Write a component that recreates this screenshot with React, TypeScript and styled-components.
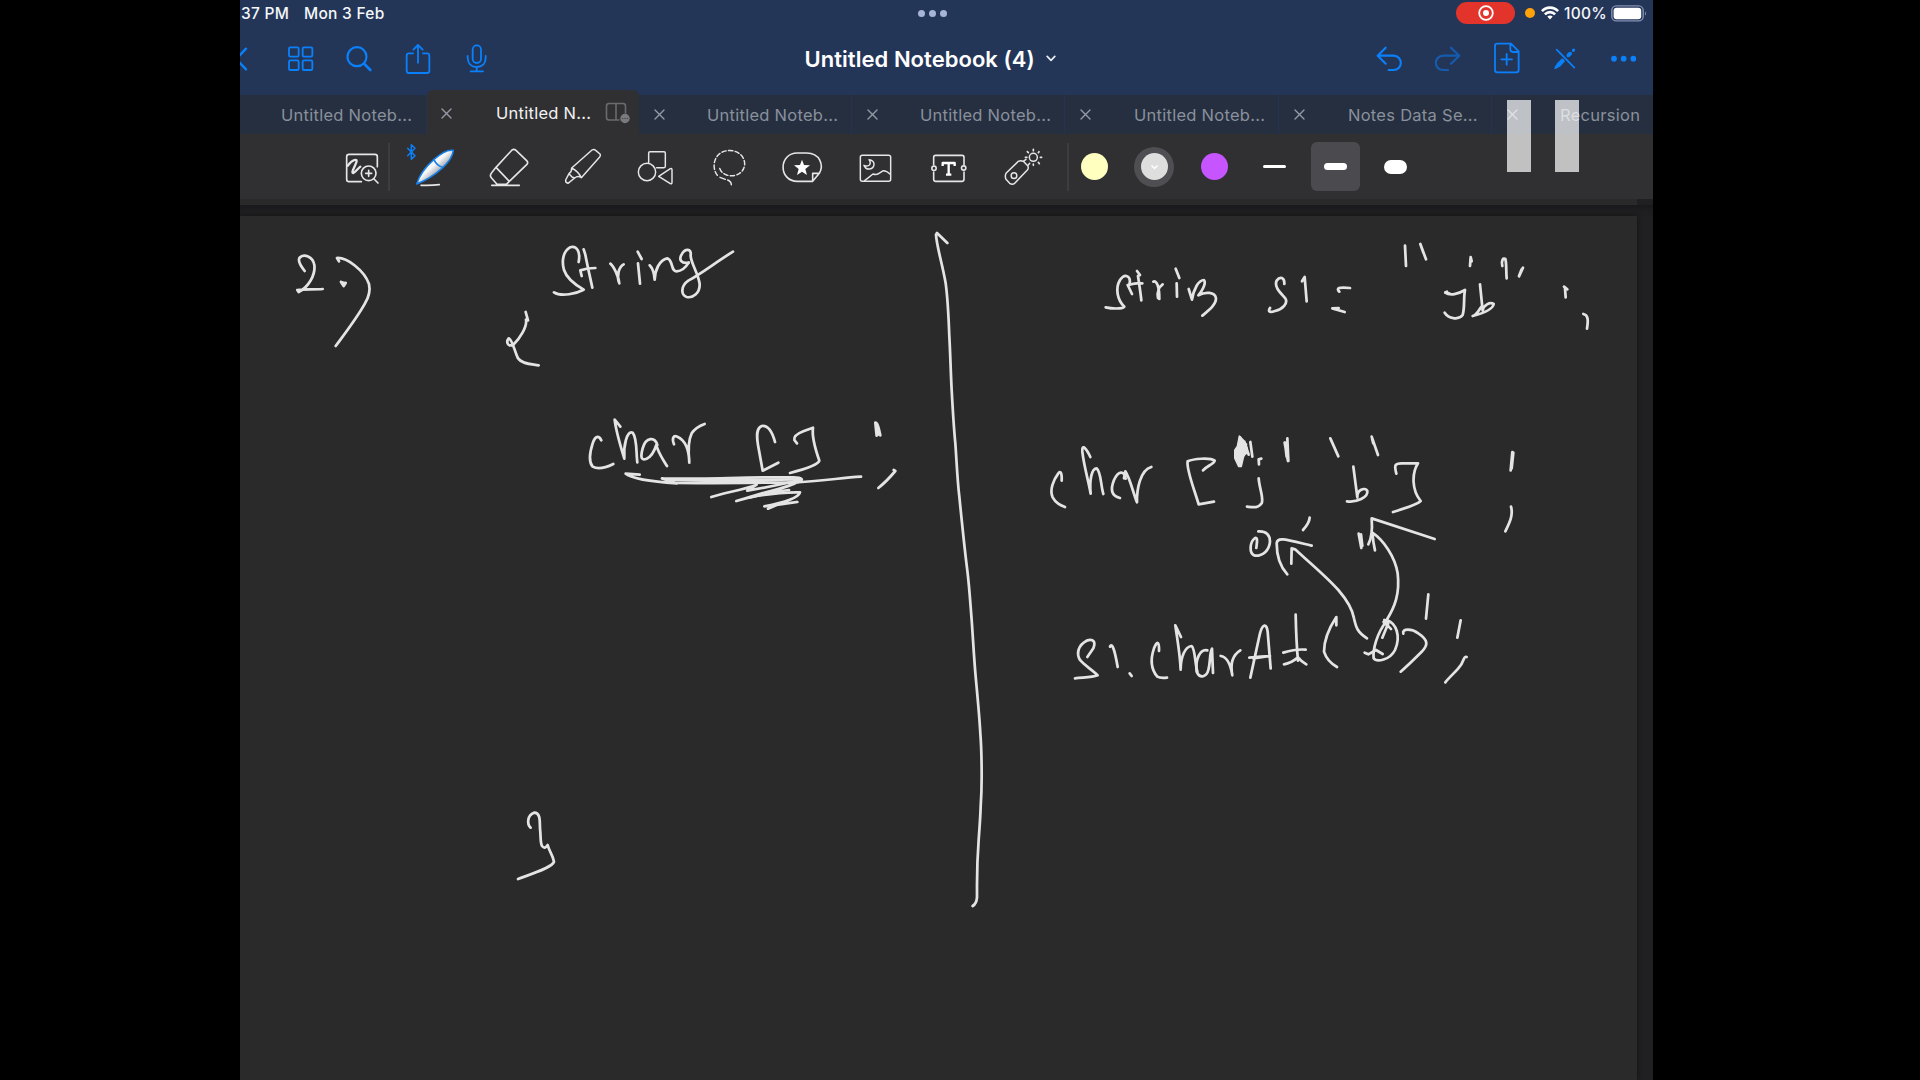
import React from "react";
import styled, { createGlobalStyle } from "styled-components";

const BLUE = "#0a80fb";

const Global = createGlobalStyle`
  html, body { margin: 0; background: #000; overflow: hidden; }
  * { box-sizing: border-box; }
`;

const Stage = styled.div`
  width: 1920px;
  height: 1080px;
  background: #000;
  display: flex;
  justify-content: flex-start;
  padding-left: 240px;
  font-family: Inter, "Liberation Sans", sans-serif;
`;

const Tablet = styled.div`
  position: relative;
  width: 1413px;
  height: 1080px;
  overflow: hidden;
  display: flex;
  flex-direction: column;
  background: #202022;
`;

const Header = styled.header`
  height: 134px;
  flex: none;
  display: flex;
  flex-direction: column;
  background: #243658;
`;

const StatusBar = styled.div`
  height: 26px;
  flex: none;
  display: grid;
  grid-template-columns: 620px 1fr 620px;
  align-items: center;
  color: #f4f6fa;
  font-size: 15.5px;
  font-weight: 500;
  line-height: 26px;
  white-space: nowrap;
`;

const StatusLeft = styled.div`
  display: flex;
  padding-left: 1px;
`;

const StatusLabel = styled.span<{ $w: number; $ls?: number }>`
  width: ${(p) => p.$w}px;
  height: 26px;
  line-height: 28px;
  letter-spacing: ${(p) => p.$ls ?? 0}px;
`;

const Dots = styled.div`
  display: flex;
  justify-content: center;
  gap: 3.7px;
  padding-right: 28px;
  width: 100%;
`;

const Dot = styled.i`
  width: 7px;
  height: 7px;
  border-radius: 50%;
  background: #a6b4d7;
`;

const StatusRight = styled.div`
  display: flex;
  align-items: center;
  justify-content: flex-end;
  height: 26px;
  padding-right: 6px;
`;

const RecordPill = styled.div`
  width: 59px;
  height: 22px;
  border-radius: 11px;
  background: #e3342b;
  display: flex;
  align-items: center;
  justify-content: center;
  margin-right: 10px;
`;

const MicDot = styled.i`
  width: 10px;
  height: 10px;
  border-radius: 50%;
  background: #ffa20a;
  margin-right: 6px;
`;

const NavBar = styled.nav`
  height: 69px;
  flex: none;
  display: flex;
  justify-content: space-between;
`;

const NavGroup = styled.div<{ $w: number }>`
  display: flex;
  width: ${(p) => p.$w}px;
`;

const Title = styled.div`
  display: flex;
  align-items: center;
  height: 65px;
  gap: 11px;
  width: 555px;
  color: #fff;
  font-size: 22px;
  font-weight: 600;
  letter-spacing: 0.04px;
  white-space: nowrap;
`;

const Tabs = styled.div`
  height: 39px;
  flex: none;
  display: flex;
  align-items: flex-end;
  background: #252f40;
`;

const Tab = styled.div<{ $w: number; $active?: boolean }>`
  width: ${(p) => p.$w}px;
  height: ${(p) => (p.$active ? 44 : 39)}px;
  padding-top: ${(p) => (p.$active ? 2 : 0)}px;
  flex: none;
  display: flex;
  align-items: center;
  border-radius: ${(p) => (p.$active ? "6px 6px 0 0" : "0")};
  border-right: ${(p) => (p.$active ? "0" : "1px solid #243350")};
  background: ${(p) => (p.$active ? "#303032" : "transparent")};
  color: ${(p) => (p.$active ? "#f2f2f3" : "#8a909c")};
`;

const CloseSlot = styled.span<{ $shift?: number }>`
  width: 39px;
  flex: none;
  display: flex;
  justify-content: center;
  padding-left: ${(p) => p.$shift ?? 0}px;
`;

const TabName = styled.span<{ $pad: number }>`
  padding-left: ${(p) => p.$pad}px;
  letter-spacing: 0.27px;
  font-size: 16.5px;
  line-height: 20px;
  white-space: nowrap;
`;

const SplitSlot = styled.span`
  display: flex;
  margin-left: auto;
  margin-right: 8px;
`;

const Toolbar = styled.div`
  height: 65px;
  flex: none;
  display: flex;
  align-items: center;
  background: #303032;
`;

const Rule = styled.i`
  width: 2px;
  height: 48px;
  background: #3d3d40;
`;

const ToolGap = styled.span<{ $w: number }>`
  width: ${(p) => p.$w}px;
  flex: none;
`;

const Slot = styled.div<{ $w: number }>`
  width: ${(p) => p.$w}px;
  flex: none;
  display: flex;
  align-items: center;
  justify-content: center;
`;

const Swatch = styled.div<{ $color: string; $selected?: boolean }>`
  width: 40px;
  height: 40px;
  border-radius: 50%;
  display: flex;
  align-items: center;
  justify-content: center;
  background: ${(p) => (p.$selected ? "#4e4e53" : "transparent")};
  &::before {
    content: "";
    width: 27px;
    height: 27px;
    border-radius: 50%;
    background: ${(p) => p.$color};
  }
`;

const SwatchMark = styled.svg`
  width: 27px;
  height: 27px;
  margin-left: -27px;
`;

const Nib = styled.div<{ $h: number; $selected?: boolean }>`
  width: 49px;
  height: 49px;
  border-radius: 6px;
  display: flex;
  align-items: center;
  justify-content: center;
  background: ${(p) => (p.$selected ? "#4b4b4f" : "transparent")};
  &::before {
    content: "";
    width: 23px;
    height: ${(p) => p.$h}px;
    border-radius: ${(p) => p.$h / 2}px;
    background: #fff;
  }
`;

const PreviousPage = styled.div`
  width: 1397px;
  height: 6px;
  flex: none;
  background: #2a2a2b;
`;

const PageGap = styled.div`
  height: 11px;
  flex: none;
  background: linear-gradient(#19191b, #1e1e20 50%, #1f1f21);
`;

const Page = styled.main`
  width: 1397px;
  height: 864px;
  flex: none;
  background: #2a2a2a;
  box-shadow: 0 0 5px rgba(0, 0, 0, 0.45);
`;

const Ink = styled.svg`
  display: block;
  width: 1397px;
  height: 864px;
  fill: none;
  stroke: #e4e4e4;
  stroke-width: 8.2;
  stroke-linecap: round;
  stroke-linejoin: round;
`;

const Pause = styled.div`
  position: absolute;
  left: 1267px;
  top: 100px;
  display: flex;
  gap: 24px;
`;

const PauseBar = styled.i`
  width: 24px;
  height: 72px;
  background: rgba(255, 255, 255, 0.7);
`;

const Art = styled.svg<{ $color: string; $sw: number; $cap?: string }>`
  display: block;
  flex: none;
  fill: none;
  stroke: ${(p) => p.$color};
  stroke-width: ${(p) => p.$sw};
  stroke-linecap: ${(p) => p.$cap ?? "round"};
  stroke-linejoin: round;
`;

type IconProps = { x: number; w: number; color?: string; sw?: number; children: React.ReactNode };

/* Icon artwork is drawn on a grid three times finer than the layout. */
const ToolIcon = ({ x, w, color = "#e6e6e6", sw = 4.8, children }: IconProps) => (
  <Art width={w} height={65} viewBox={`${x} 402 ${w * 3} 195`} $color={color} $sw={sw}>
    {children}
  </Art>
);

const NavIcon = ({ x, w, color = BLUE, sw = 6.4, children }: IconProps) => (
  <Art width={w} height={69} viewBox={`${x} 78 ${w * 3} 207`} $color={color} $sw={sw}>
    {children}
  </Art>
);

const Close = () => (
  <Art width={11} height={11} viewBox="0 0 11 11" $color="#959ba6" $sw={1.4}>
    <path d="M1 1L10 10M10 1L1 10" />
  </Art>
);

const inactiveTabs = [
  { name: "Untitled Noteb...", w: 213, pad: 29 },
  { name: "Untitled Noteb...", w: 213, pad: 29 },
  { name: "Untitled Noteb...", w: 214, pad: 30 },
  { name: "Notes Data Se...", w: 213, pad: 30 },
  { name: "Recursion", w: 213, pad: 29 },
];

const strokes: { at: [number, number]; d: string[] }[] = [
  {
    at: [240, 210],
    d: [
      "M194 183C182 168 172 150 180 142C192 132 218 138 223 165C227 195 205 232 176 246L172 240C190 237 220 239 248 237",
      "M303 216L316 220M303 216L311 228L317 219",
      "M297 154L291 144C320 142 372 180 387 222C392 245 386 262 375 280C350 325 315 370 287 408",
      "M1016 156C1022 125 1010 105 990 112C968 125 965 155 972 180C980 205 1012 228 1031 239C1010 250 965 262 942 247",
      "M1031 118L1036 134C1042 165 1051 205 1057 233M1066 174C1050 174 1030 178 1021 181L1025 198",
      "M1111 161C1122 170 1136 200 1138 220C1128 195 1138 170 1151 163",
      "M1193 125L1205 147M1194 160L1200 221",
      "M1229 166C1238 175 1243 195 1244 209C1245 180 1258 150 1282 145C1300 150 1292 185 1310 184C1330 183 1340 168 1346 158",
      "M1346 158C1325 162 1315 150 1325 133C1335 115 1355 115 1352 135C1350 155 1375 190 1379 222C1380 250 1358 265 1340 261C1322 255 1322 228 1345 212C1385 190 1430 155 1479 125",
      "M857 306L864 331L858 329C862 350 840 385 820 404C802 412 798 395 806 385C818 390 822 420 834 445C845 462 875 462 896 466",
    ],
  },
  {
    at: [560, 390],
    d: [
      "M124 151C116 135 105 138 98 160C90 185 85 215 98 230C115 240 140 232 160 222",
      "M181 110L164 89C168 125 182 170 193 206C190 170 200 120 218 128C232 145 228 190 232 217",
      "M292 165C285 140 258 140 248 175C240 205 245 212 260 206C275 200 284 180 289 165C295 190 310 210 321 228",
      "M342 163C335 145 340 135 352 140C375 150 387 180 388 218C385 190 385 150 395 130C405 115 420 107 434 102",
      "M645 156C638 130 625 105 605 108C588 115 590 140 594 165L608 242L655 218",
      "M711 160L703 150C700 138 715 130 730 124L759 113C755 140 765 175 778 212C775 225 725 240 690 249",
      "M950 137L946 98C954 98 957 120 961 136M949 99L953 135",
      "M1001 240L1006 243C990 262 975 278 955 294",
      "M239 254L197 251C215 265 270 275 350 280L306 265C350 270 600 260 700 262C728 262 732 270 715 276",
      "M350 279C480 280 600 278 700 277C780 274 840 264 903 260M330 270C450 272 600 270 720 268",
      "M454 321C495 308 555 298 590 284L562 302C620 292 670 282 722 270C700 285 660 297 620 306L529 333C580 318 640 305 687 300",
      "M570 322C620 312 670 306 720 307C715 325 670 338 613 349C650 345 685 338 712 336L650 345L624 356",
    ],
  },
  {
    at: [900, 210],
    d: [
      "M142 99L111 69L108 74C110 110 128 165 137 220C144 270 146 325 148 380C151 430 152 485 155 540C158 595 161 650 166 700C170 755 172 810 178 860C184 920 194 1020 202 1082C208 1130 211 1180 215 1230C219 1285 222 1345 227 1400C232 1455 238 1515 241 1570C245 1620 245 1660 245 1700C245 1735 244 1760 242 1790C241 1825 238 1860 236 1890C233 1930 231 1980 231 2025V2062C230 2076 226 2083 218 2088",
    ],
  },
  {
    at: [480, 780],
    d: [
      "M152 143C140 132 142 105 162 98C182 97 179 125 180 145C183 170 180 185 186 198C193 207 198 202 203 195C208 215 218 225 222 245C218 262 160 280 114 297",
    ],
  },
  {
    at: [1090, 220],
    d: [
      "M118 195C125 168 105 158 90 180C75 205 82 240 103 260C95 268 65 266 47 262",
      "M141 153L150 165L144 168C148 195 152 220 154 241M157 190C143 188 125 192 113 195L126 222",
      "M190 185C200 180 208 200 208 237L204 234C200 215 208 200 218 193",
      "M257 146L268 174M260 190L261 230",
      "M296 207L306 239C310 210 325 180 342 180C350 190 335 215 325 226C345 215 375 215 378 235C378 255 355 272 337 287",
      "M583 192C584 172 570 168 560 182C552 200 568 215 586 235C595 250 578 268 555 273C535 280 535 272 540 264",
      "M636 184L644 171L650 244",
      "M748 215C738 205 745 200 780 204M764 276L727 265L746 264",
    ],
  },
  {
    at: [1350, 220],
    d: [
      "M165 77L168 138M211 72L228 118M212 75L220 98",
      "M360 138L362 111L365 124",
      "M457 138C453 120 460 113 466 117C470 130 468 155 470 175",
      "M519 143L507 169M515 148L507 168",
      "M286 217C300 228 325 222 345 210C340 235 345 260 338 285C325 302 295 295 284 278",
      "M291 215L286 218L298 221",
      "M390 193L398 272C400 255 420 245 431 252C430 265 405 278 368 288C382 285 388 265 395 260",
      "M642 200L652 208L645 205L647 232",
      "M700 282C715 285 715 300 711 326",
    ],
  },
  {
    at: [1040, 410],
    d: [
      "M65 212C66 190 62 180 55 190C40 210 28 240 38 262C48 280 60 285 75 291",
      "M151 141C140 118 125 98 127 125C132 170 145 210 152 251C148 210 155 175 170 175C183 185 182 225 190 252",
      "M257 206C252 180 235 182 222 210C210 240 215 258 240 264M252 205L256 184C270 205 280 250 291 277C290 240 300 180 334 171",
      "M489 181C500 168 522 162 524 152C510 142 460 146 443 154C438 175 460 230 476 283L522 275",
      "M657 163L656 148L664 146M656 205C658 235 672 265 665 280C655 295 640 292 621 290",
      "M631 96L637 140M613 95L626 134M600 82L605 125M618 103L612 135",
      "M734 98L744 153M742 85L745 153M735 98L740 140",
      "M871 85L895 139M995 80L1014 135M996 85L1000 100",
      "M940 170L952 262C950 240 975 230 982 243C985 262 950 278 921 274",
      "M1069 191C1062 165 1065 160 1085 160L1134 160C1115 190 1115 240 1142 273C1130 285 1095 295 1059 306",
      "M1417 126L1412 181M1420 128L1415 175M1413 290C1420 315 1410 335 1396 364",
      "M809 323C808 338 800 348 789 360",
      "M655 364C678 362 690 375 690 395C688 420 670 438 645 437C625 430 630 395 645 384C655 382 650 400 649 414",
      "M742 493C715 465 710 430 710 400C712 380 735 388 815 407",
      "M754 461L755 415L765 418C800 450 860 500 895 540C925 575 938 600 942 625C948 650 950 665 981 685",
      "M956 371L964 414M963 373L967 408M985 403C995 385 998 365 995 325L1184 387",
      "M1005 421C1000 400 998 380 997 368C1030 390 1065 440 1073 490C1080 550 1065 590 1040 630",
      "M142 741L160 715C168 695 160 685 140 692C115 705 108 730 120 750C135 768 158 780 173 796C155 803 130 802 105 805",
      "M210 710C217 695 225 725 233 771M269 790L275 798",
      "M357 723C358 695 352 690 342 715C330 750 335 780 352 800C360 805 370 804 381 803",
      "M423 681L406 646C412 690 420 730 422 779C422 740 435 710 455 708C465 715 465 760 472 785",
      "M502 721C480 715 465 750 470 785C480 808 500 800 505 780C512 755 508 730 516 716L519 789",
      "M542 738C560 740 572 765 577 796C570 760 578 735 601 721",
      "M631 803L660 670C668 640 680 640 683 665L692 775M628 743C650 740 670 738 690 738L640 745",
      "M767 614C768 660 770 710 774 752M730 728C750 722 775 717 797 719M732 763C748 760 762 752 774 742C782 752 790 758 799 763",
      "M889 646L889 621C870 650 852 690 852 725C860 750 875 762 891 771",
      "M1053 657C1035 635 1020 640 1040 630C1070 640 1083 680 1065 720C1050 750 1010 758 1001 745C998 720 1010 670 1040 633",
      "M1033 630L1045 640L1027 683M974 728L985 733L1008 720L1028 732",
      "M1090 671C1085 655 1115 655 1135 670C1165 690 1165 705 1145 725C1125 745 1105 765 1082 785",
      "M1165 553L1158 626M1262 631L1252 683",
      "M1280 741C1268 738 1275 755 1255 775C1242 790 1225 805 1216 817",
    ],
  },
];

const App = () => (
  <>
    <Global />
    <Stage>
      <Tablet>
        <Header>
          <StatusBar>
            <StatusLeft>
              <StatusLabel $w={63} $ls={0.25}>37 PM</StatusLabel>
              <StatusLabel $w={100} $ls={0.27}>Mon 3 Feb</StatusLabel>
            </StatusLeft>
            <Dots>
              <Dot />
              <Dot />
              <Dot />
            </Dots>
            <StatusRight>
              <RecordPill>
                <Art width={16} height={16} viewBox="0 0 16 16" $color="#fff" $sw={1.8}>
                  <circle cx="8" cy="8" r="6.8" />
                  <circle cx="8" cy="8" r="3" fill="#fff" stroke="none" />
                </Art>
              </RecordPill>
              <MicDot />
              <Art width={18} height={14} viewBox="0 0 18 14" $color="#fff" $sw={2.6} $cap="butt">
                <path d="M0.9 5.2C5.4 0.4 12.6 0.4 17.1 5.2" />
                <path d="M3.9 8.4C6.8 5.4 11.2 5.4 14.1 8.4" />
                <path d="M9 13.4L6.3 10.5C7.8 9 10.2 9 11.7 10.5Z" fill="#fff" stroke="none" />
              </Art>
              <ToolGap $w={5} />
              <StatusLabel $w={47} $ls={0.3}>100%</StatusLabel>
              <Art width={36} height={17} viewBox="0 0 36 17" $color="#8390b4" $sw={1.4}>
                <rect x="0.8" y="0.9" width="31.4" height="15" rx="4.5" />
                <rect x="2.6" y="2.8" width="27.6" height="11.4" rx="3" fill="#fff" stroke="none" />
                <path d="M34 6.4C35.4 7.2 35.4 9.6 34 10.4Z" fill="#8390b4" stroke="none" />
              </Art>
            </StatusRight>
          </StatusBar>

          <NavBar>
            <NavGroup $w={564}>
              <NavIcon x={30} w={32} sw={7}>
                <path d="M48 146L19 177L48 208" />
              </NavIcon>
              <NavIcon x={126} w={58} sw={5.4}>
                <rect x="177" y="142" width="29" height="28" rx="4" />
                <rect x="218" y="142" width="29" height="28" rx="4" />
                <rect x="177" y="181" width="29" height="29" rx="4" />
                <rect x="218" y="181" width="29" height="29" rx="4" />
              </NavIcon>
              <NavIcon x={300} w={59}>
                <circle cx="381" cy="170" r="28.5" />
                <path d="M402 191L421 210" strokeWidth="8" />
              </NavIcon>
              <NavIcon x={477} w={59} sw={5.4}>
                <path d="M549 160H537Q530 160 530 167V212Q530 219 537 219H591Q598 219 598 212V167Q598 160 591 160H579" />
                <path d="M564 188V136M550 149L564 135L578 149" />
              </NavIcon>
              <NavIcon x={654} w={59} sw={5.4}>
                <rect x="728" y="136" width="25" height="53" rx="12.5" />
                <path d="M713 168V174Q715 201 740 201Q766 201 767 174V168M740 201V213M722 214H759" />
              </NavIcon>
            </NavGroup>
            <Title>
              <span>Untitled Notebook (4)</span>
              <Art width={10} height={7} viewBox="0 0 10 7" $color="#e8ecf4" $sw={1.7}>
                <path d="M1.2 1.4L5 5.4L8.8 1.4" />
              </Art>
            </Title>
            <NavGroup $w={293}>
              <NavIcon x={540} w={59}>
                <path d="M617 143L593 167L617 191M593 167H640C670 167 670 210 640 210H626" />
              </NavIcon>
              <NavIcon x={717} w={59} color="#155caf">
                <path d="M813 143L838 167L813 191M838 167H790C760 167 760 210 790 210H804" />
              </NavIcon>
              <NavIcon x={894} w={58} sw={5.4}>
                <path d="M993 131H952Q945 131 945 138V210Q945 217 952 217H1009Q1016 217 1016 210V154ZM991 133V148Q991 156 999 156H1014M980 162V194M964 178H996" />
              </NavIcon>
              <NavIcon x={1068} w={59} sw={5}>
                <path d="M1130 149L1183 203" />
                <path d="M1122 208L1130 191L1146 175L1155 184L1140 200ZM1160 163L1168 155L1176 163L1168 171Z" fill={BLUE} stroke="none" />
                <path d="M1128 202L1149 181" strokeWidth="8" />
                <path d="M1164 167L1171 160M1180 151L1181 150" strokeWidth="9" />
              </NavIcon>
              <NavIcon x={1245} w={58}>
                <g fill={BLUE} stroke="none">
                  <circle cx="1302" cy="176" r="8.5" />
                  <circle cx="1331" cy="176" r="8.5" />
                  <circle cx="1360" cy="176" r="8.5" />
                </g>
              </NavIcon>
            </NavGroup>
          </NavBar>

          <Tabs>
            <Tab $w={187}>
              <TabName $pad={41}>Untitled Noteb...</TabName>
            </Tab>
            <Tab $w={212} $active>
              <CloseSlot>
                <Close />
              </CloseSlot>
              <TabName $pad={30}>Untitled N...</TabName>
              <SplitSlot>
                <Art width={26} height={22} viewBox="0 0 26 22" $color="#6b6b6f" $sw={1.6}>
                  <path d="M14 18H4Q1.5 18 1.5 15.500V4Q1.500 1.500 4 1.500H18Q20.500 1.500 20.500 4V11M11 1.500V18" />
                  <circle cx="20" cy="16.500" r="4.700" fill="#7a7a7e" stroke="none" />
                  <path d="M17.700 16.500H17.700M20 16.500H20M22.300 16.500H22.300" stroke="#303032" strokeWidth="1.200" />
                </Art>
              </SplitSlot>
            </Tab>
            {inactiveTabs.map((t, i) => (
              <Tab key={i} $w={t.w}>
                <CloseSlot $shift={2}>
                  <Close />
                </CloseSlot>
                <TabName $pad={t.pad}>{t.name}</TabName>
              </Tab>
            ))}
          </Tabs>
        </Header>

        <Toolbar>
          <ToolGap $w={85} />
          <ToolIcon x={285} w={63} sw={5}>
            <path d="M394 545H357Q350 545 350 538V470Q350 463 357 463H435Q442 463 442 470V500" />
            <path d="M353 497C368 478 384 474 379 487C374 500 362 520 370 519C377 516 384 505 391 500" strokeWidth="7" />
            <circle cx="416" cy="520" r="22" />
            <path d="M416 511V529M407 520H425M432 537L444 549" />
          </ToolIcon>
          <Rule />
          <ToolGap $w={8} />
          <ToolIcon x={504} w={73}>
            <defs>
              <linearGradient id="barrel" x1="0" y1="0" x2="1" y2="1">
                <stop offset="0.46" stopColor="#f4f6f8" />
                <stop offset="0.62" stopColor="#a4a9af" />
              </linearGradient>
            </defs>
            <path d="M533 445L555 467L544 478V434L555 445L533 467" stroke={BLUE} strokeWidth="4.500" />
            <path d="M560 552C570 520 586 501 612 478C635 458 655 448 670 451C668 471 656 487 635 506C611 527 587 542 560 552Z" fill="url(#barrel)" stroke="#1680e8" strokeWidth="4.500" />
            <path d="M613 481Q621 497 636 501" stroke="#1680e8" strokeWidth="5" />
            <path d="M573 556Q605 557 628 554" />
          </ToolIcon>
          <ToolIcon x={723} w={73}>
            <path d="M846 450Q852 446 858 451L890 482Q896 488 890 494L838 544L829 553H801L784 533Q778 526 785 518L798 502ZM798 502L838 544M785 556H868" />
          </ToolIcon>
          <ToolIcon x={942} w={73} sw={4.4}>
            <path d="M1086 450Q1092 446 1097 451L1110 462Q1113 466 1109 471L1054 533Q1044 526 1034 534L1026 531L1017 521Q1026 514 1025 504ZM1025 504Q1045 514 1054 533M1017 521L1007 540Q1006 548 1014 550L1034 534" />
          </ToolIcon>
          <ToolIcon x={1161} w={73} sw={4.4}>
            <path d="M1256 488V459Q1256 455 1260 455H1302Q1306 455 1306 459V499Q1306 503 1302 503H1280" />
            <circle cx="1251" cy="516" r="26" />
            <path d="M1286 529L1321 506Q1326 504 1326 509V547Q1326 553 1321 551Z" />
          </ToolIcon>
          <ToolIcon x={-30} w={73} sw={4.4}>
            <path d="M52 526C35 505 40 466 70 455C105 443 135 465 134 493C132 520 105 533 80 525C66 520 59 510 58 500" strokeDasharray="13 7" />
            <path d="M60 532L76 538M83 540C92 544 94 548 94 554" />
          </ToolIcon>
          <ToolIcon x={189} w={73}>
            <path d="M338 544H292C235 544 235 459 292 459H320C360 459 372 496 358 520L338 544V520H358" />
            <path d="M306 479L312 495L330 496L316 507L321 525L306 515L291 525L296 507L282 496L300 495Z" fill="#fff" stroke="none" />
          </ToolIcon>
          <ToolIcon x={408} w={73} sw={4.4}>
            <rect x="481" y="466" width="91" height="78" rx="6" />
            <path d="M507 479C516 492 507 502 492 496C500 514 520 508 522 494C523 486 516 480 507 479ZM494 542L519 522C526 525 530 525 537 520L550 512Q560 512 571 523" />
          </ToolIcon>
          <ToolIcon x={627} w={73}>
            <path d="M701 494V472Q701 466 707 466H786Q792 466 792 472V494M701 516V538Q701 544 707 544H786Q792 544 792 538V516" />
            <circle cx="702" cy="505" r="6.500" />
            <circle cx="791" cy="504" r="6.500" />
            <path d="M728 498V489H764V498M746 489V523M738 524H754" stroke="#fff" strokeWidth="7" strokeLinecap="butt" />
          </ToolIcon>
          <ToolIcon x={846} w={73} sw={4.4}>
            <path d="M918 520L955 484Q962 480 970 484L983 497Q987 504 982 510L944 550Q937 555 929 550L918 538Q914 529 918 520ZM970 484L978 478M983 497L989 490" />
            <circle cx="942" cy="527" r="8.500" />
            <circle cx="1000" cy="472" r="12" />
            <path d="M1000 448V452M1017 455L1015 458M1025 472H1021M1018 491L1015 487M1000 496V492M981 472H976M982 455L985 458" strokeWidth="5" />
          </ToolIcon>
          <ToolGap $w={12} />
          <Rule />
          <Slot $w={50}>
            <Swatch $color="#ffffc0" />
          </Slot>
          <Slot $w={70}>
            <Swatch $color="#dedede" $selected>
              <SwatchMark viewBox="0 0 27 27">
                <path d="M10.500 12.500L13.500 15.500L16.500 12.500" fill="none" stroke="#fff" strokeWidth="1.500" />
              </SwatchMark>
            </Swatch>
          </Slot>
          <Slot $w={51}>
            <Swatch $color="#c654ff" />
          </Slot>
          <Slot $w={69}>
            <Nib $h={3} />
          </Slot>
          <Slot $w={52}>
            <Nib $h={7} $selected />
          </Slot>
          <Slot $w={68}>
            <Nib $h={14} />
          </Slot>
        </Toolbar>

        <PreviousPage />
        <PageGap />
        <Page>
          <Ink viewBox="240 216 1397 864">
            {strokes.map((s, i) => (
              <g key={i} transform={`translate(${s.at[0]} ${s.at[1]}) scale(0.33333)`}>
                {s.d.map((d, j) => (
                  <path key={j} d={d} />
                ))}
              </g>
            ))}
            <path
              transform="translate(1040 410) scale(0.33333)"
              d="M598 78L610 90L622 115L620 130L612 135L604 170L596 170L584 145V120L592 108Z"
              fill="#e4e4e4"
              strokeWidth="4"
            />
          </Ink>
        </Page>

        <Pause>
          <PauseBar />
          <PauseBar />
        </Pause>
      </Tablet>
    </Stage>
  </>
);

export default App;
